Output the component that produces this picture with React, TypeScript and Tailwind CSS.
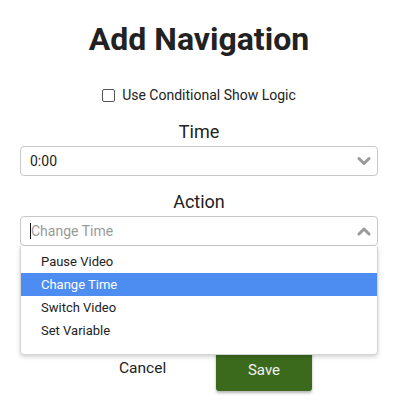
import React from "react";

function Chevron({ up }: { up?: boolean }) {
  return (
    <svg width="14" height="10" viewBox="0 0 14 10" className="shrink-0">
      <polyline
        points={up ? "2,8 7,3 12,8" : "2,2.5 7,7.5 12,2.5"}
        fill="none"
        stroke="#9a9a9a"
        strokeWidth="3"
        strokeLinecap="round"
        strokeLinejoin="round"
      />
    </svg>
  );
}

export default function App() {
  return (
    <div
      className="w-[405px] h-[407px] bg-white text-[#222] flex flex-col items-center pl-[20px] pr-[27px]"
      style={{ fontFamily: "Roboto, 'Noto Sans', sans-serif" }}
    >
      <h1 className="mt-[20px] text-[32px] leading-[38px] font-bold text-[#222]">Add Navigation</h1>
      <label className="mt-[28px] flex items-center gap-[7px] text-[14px] leading-[18px] text-[#222]">
        <span className="w-[13px] h-[13px] border border-[#555] rounded-[2px] bg-white" />
        <span>Use Conditional Show Logic</span>
      </label>
      <div className="mt-[17px] text-[18px] leading-[22px] text-[#222]">Time</div>
      <div className="mt-[3px] w-full h-[30px] border border-[#c8c8c8] rounded-[4px] flex items-center justify-between pl-[9px] pr-[6px] text-[14px]">
        <span>0:00</span>
        <Chevron />
      </div>
      <div className="mt-[15px] text-[18px] leading-[22px] text-[#222]">Action</div>
      <div className="relative mt-[3px] w-full">
        <div className="h-[30px] border border-[#c8c8c8] rounded-[4px] flex items-center justify-between pl-[9px] pr-[6px] text-[14px]">
          <span className="flex items-center text-[#9a9a9a]">
            <span className="w-px h-[16px] bg-[#111]" />
            Change Time
          </span>
          <Chevron up />
        </div>
        <div className="absolute left-0 right-0 top-[30px] z-10 bg-white border border-[#d4d4d4] border-t-0 rounded-b-[4px] shadow-[0_2px_4px_rgba(0,0,0,0.18)] pt-[4px] pb-[12px] text-[13px] text-[#222]">
          <div className="h-[23px] flex items-center pl-[20px]">Pause Video</div>
          <div className="h-[23px] flex items-center pl-[20px] bg-[#4d8df2] text-white">Change Time</div>
          <div className="h-[23px] flex items-center pl-[20px]">Switch Video</div>
          <div className="h-[23px] flex items-center pl-[20px]">Set Variable</div>
        </div>
      </div>
      <div className="mt-[104px] flex items-center w-full pl-[99px]">
        <div className="w-[47px] text-[15.5px] text-[#222] -mt-[3px]">Cancel</div>
        <div className="ml-[50px] w-[96px] h-[41px] bg-[#3b6a1c] rounded-[3px] shadow-[0_2px_3px_rgba(0,0,0,0.3)] flex items-center justify-center text-[15px] text-[#f2f2f2]">
          Save
        </div>
      </div>
    </div>
  );
}
